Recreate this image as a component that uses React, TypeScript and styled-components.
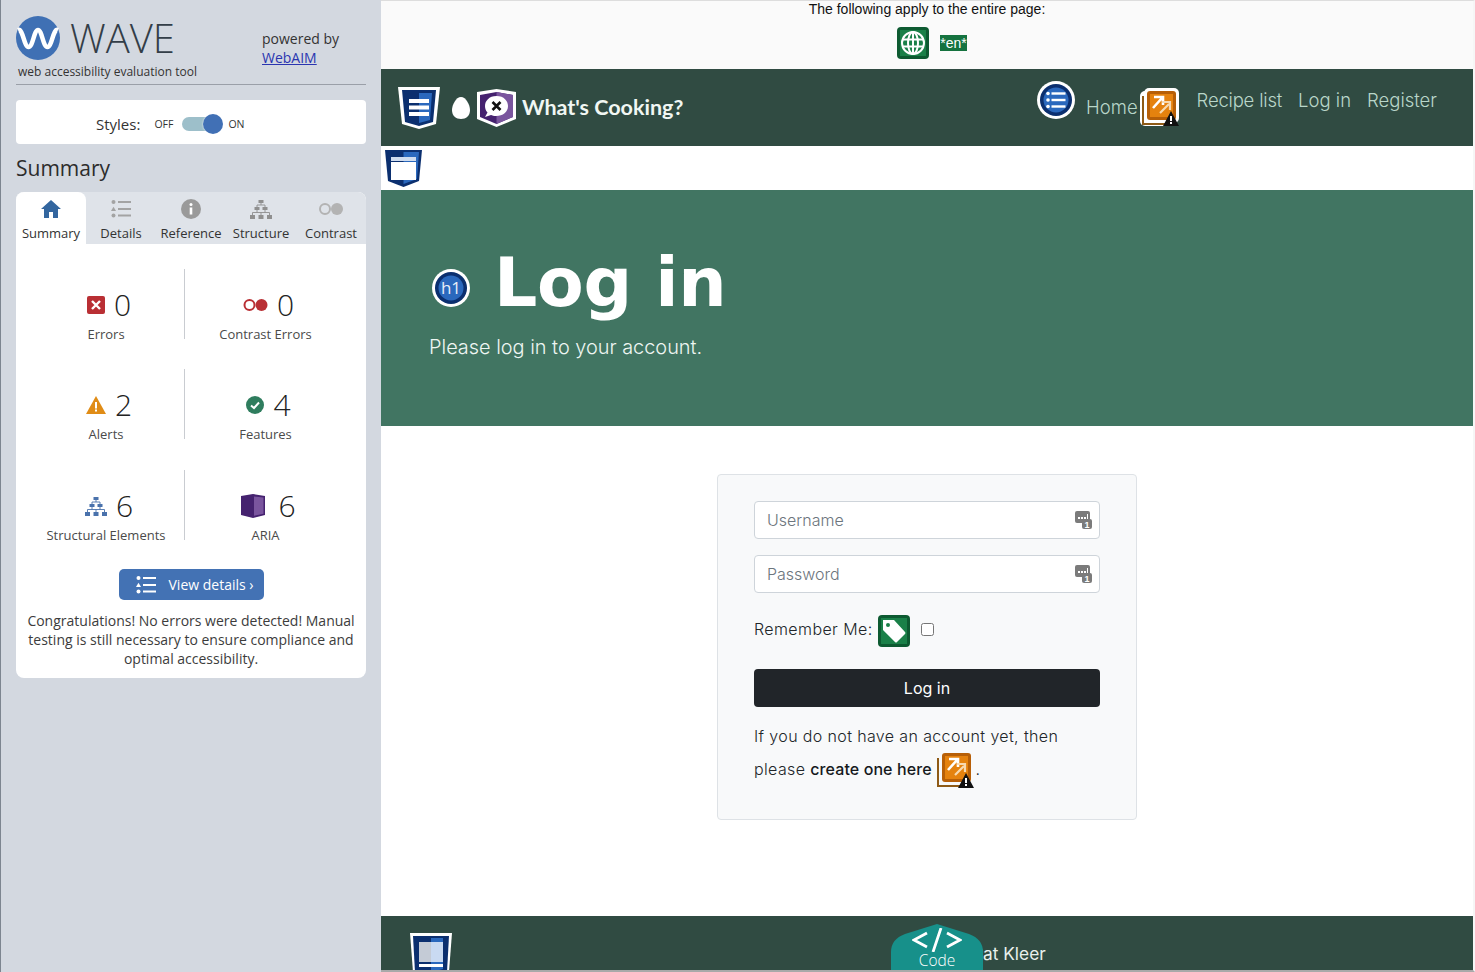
import React from 'react';
import styled, { createGlobalStyle } from 'styled-components';

const GlobalStyle = createGlobalStyle`
  * { box-sizing: border-box; }
  html, body { margin: 0; padding: 0; height: 100%; overflow: hidden; background: #fff; }
  body { font-family: "Open Sans", "Liberation Sans", sans-serif; color: #333; }
  h1, h2, p { margin: 0; }
`;

const Shell = styled.div`
  display: flex;
  width: 1475px;
  height: 972px;
  overflow: hidden;
`;

/* ---------- WAVE sidebar ---------- */

const Sidebar = styled.aside`
  flex: 0 0 381px;
  height: 972px;
  padding: 16px 15px 0 15px;
  background: #d3d8e0;
  border-left: 1px solid #7d8590;
`;

const Brand = styled.div`
  display: flex;
  height: 69px;
  border-bottom: 1px solid #9a9fa8;
`;

const LogoBlock = styled.div`
  flex: 0 0 246px;
`;

const LogoRow = styled.div`
  display: flex;
  align-items: center;
  gap: 10px;
  height: 44px;
`;

const LogoText = styled.span`
  font-weight: 300;
  font-size: 40px;
  line-height: 48px;
  color: #333e48;
`;

const Tagline = styled.div`
  margin: 4px 0 0 2px;
  font-size: 12px;
  line-height: 16px;
  color: #333;
`;

const Powered = styled.div`
  padding-top: 13px;
  font-size: 14px;
  line-height: 19px;
  color: #333;

  a {
    color: #2a35b0;
    text-decoration: underline;
  }
`;

const StylesCard = styled.div`
  display: flex;
  align-items: center;
  height: 44px;
  margin-top: 15px;
  padding: 3px 0 0 80px;
  background: #fff;
  border-radius: 4px;
`;

const StylesLabel = styled.span`
  margin-right: 14px;
  font-size: 15px;
  color: #333;
`;

const ToggleText = styled.span`
  font-size: 10.5px;
  color: #333;
`;

const Toggle = styled.div`
  position: relative;
  width: 40px;
  height: 14px;
  margin: 0 6px 0 9px;
  background: #9dbfca;
  border-radius: 7px;
  &::after {
    content: '';
    position: absolute;
    right: -1px;
    top: -3px;
    width: 20px;
    height: 20px;
    background: #4170b5;
    border-radius: 50%;
    box-shadow: 0 0 2px #fff;
  }
`;

const SummaryTitle = styled.h2`
  margin-top: 10px;
  font-weight: 400;
  font-size: 21px;
  line-height: 29px;
  color: #2c2c2c;
`;

const Panel = styled.section`
  width: 350px;
  margin-top: 9px;
  background: #fff;
  border-radius: 8px;
`;

const TabBar = styled.div`
  display: flex;
  background: #dfe3e9;
  border-radius: 8px 8px 0 0;
`;

const Tab = styled.div<{ $active?: boolean }>`
  flex: 0 0 70px;
  height: 52px;
  padding-top: 7px;
  text-align: center;
  font-size: 13px;
  line-height: 18px;
  color: #333;
  white-space: nowrap;
  background: ${(p) => (p.$active ? '#fff' : 'transparent')};
  border-radius: ${(p) => (p.$active ? '8px 8px 0 0' : '0')};

  svg {
    display: block;
    margin: 0 auto 5px;
  }
`;

const TabIconSlot = styled.div`
  display: flex;
  align-items: center;
  justify-content: center;
  height: 20px;
  margin-bottom: 5px;

  svg {
    margin: 0;
  }
`;

const StatGrid = styled.div`
  display: grid;
  grid-template-columns: 159px 161px;
  grid-auto-rows: 70px;
  row-gap: 30px;
  padding: 25px 0 0 10px;

  & > :nth-child(n + 5) {
    transform: translateY(1px);
  }
`;

const Stat = styled.div<{ $divider?: boolean }>`
  display: flex;
  flex-direction: column;
  align-items: center;
  padding-top: 16px;
  padding-left: ${(p) => (p.$divider ? '2px' : '0')};
  border-right: ${(p) => (p.$divider ? '1px solid #c9ccd1' : 'none')};
`;

const StatTop = styled.div`
  display: flex;
  align-items: center;
  justify-content: center;
  gap: 9px;
  height: 40px;
  padding-left: 6px;
  flex: 0 0 40px;
`;

const StatValue = styled.span`
  font-weight: 300;
  font-size: 30px;
  line-height: 40px;
  color: #222;
`;

const StatLabel = styled.div`
  flex: 0 0 18px;
  font-size: 13px;
  line-height: 18px;
  color: #4a4a4a;
  white-space: nowrap;
`;

const DetailsButton = styled.button`
  display: flex;
  align-items: center;
  gap: 13px;
  width: 145px;
  height: 31px;
  margin: 30px auto 0;
  padding: 0 0 0 17px;
  color: #fff;
  font-family: inherit;
  font-size: 14px;
  background: #4372b4;
  border: none;
  border-radius: 5px;
`;

const Congrats = styled.p`
  padding: 11px 8px 10px;
  text-align: center;
  font-size: 14px;
  line-height: 19px;
  color: #3c3c3c;
`;

/* ---------- page under evaluation ---------- */

const Page = styled.main`
  flex: 0 0 1094px;
  display: flex;
  flex-direction: column;
  position: relative;
  height: 972px;
  border-right: 2px solid #f6f6f6;
  border-top: 1px solid #ddd;
  border-bottom: 2px solid #a9a9a9;
  font-family: Inter, "Open Sans", sans-serif;
  font-weight: 300;
  overflow: hidden;
`;

const PageNotice = styled.div`
  flex: 0 0 68px;
  text-align: center;
  font-family: "Liberation Sans", Arial, sans-serif;
  font-weight: 400;
  font-size: 14px;
  line-height: 17px;
  color: #111;
  background: #fafafa;
`;

const NoticeIcons = styled.div`
  display: flex;
  align-items: center;
  justify-content: center;
  gap: 11px;
  margin-top: 9px;
  padding-left: 10px;
`;

const LangBadge = styled.span`
  font-size: 14px;
  line-height: 16px;
  color: #fff;
  background: #15723f;
`;

const NavBar = styled.nav`
  flex: 0 0 77px;
  display: flex;
  justify-content: space-between;
  padding: 0 36px 0 17px;
  background: #304b42;
`;

const NavBrand = styled.div`
  display: flex;
  align-items: center;
  gap: 7px;
`;

const Egg = styled.svg`
  margin: 0 0 0 5px;
`;

const BrandName = styled.span`
  margin: -2px 0 0 -1px;
  font-family: Lato, sans-serif;
  font-weight: 700;
  font-size: 21.5px;
  color: #f1f7f3;
`;

const NavLinks = styled.div`
  display: flex;
  align-items: flex-start;
`;

const HomeLink = styled.div`
  display: flex;
  align-items: flex-start;
  margin-top: 12px;
`;

const HomeText = styled.span`
  margin: 15px 2px 0 11px;
  font-size: 18.5px;
  line-height: 22px;
  color: #b9d6c9;
`;

const AlertSlot = styled.span`
  display: block;
  margin-top: 7px;
  line-height: 0;
`;

const NavLink = styled.a<{ $first?: boolean }>`
  margin: 20px 0 0 ${(p) => (p.$first ? '18px' : '16px')};
  font-size: 18.5px;
  line-height: 22px;
  letter-spacing: ${(p) => (p.$first ? '-0.2px' : '0')};
  color: #b9d6c9;
`;

const IconStrip = styled.div`
  flex: 0 0 44px;
  min-height: 0;
  padding: 4px 0 0 4px;
  background: #fff;

  svg {
    display: block;
  }
`;

const Hero = styled.header`
  flex: 0 0 236px;
  padding: 48px 0 0 48px;
  color: #fff;
  background: #417562;
`;

const HeroTitle = styled.h1`
  display: flex;
  align-items: center;
  gap: 24px;
  height: 90px;
  font-family: "DejaVu Sans", sans-serif;
  font-weight: 700;
  font-size: 68px;
  letter-spacing: -0.3px;
  line-height: 90px;
`;

const HeroIcon = styled.span`
  display: block;
  margin: 10px 0 0 3px;
  height: 38px;
  line-height: 0;
`;

const HeroText = styled.p`
  margin-top: 5px;
  font-size: 19.9px;
  line-height: 28px;
  color: #eef6f2;
`;

const Content = styled.div`
  flex: 1;
  min-height: 0;
  padding-top: 48px;
  background: #fff;
`;

const LoginCard = styled.form`
  width: 420px;
  height: 346px;
  margin: 0 auto;
  padding: 26px 36px 0;
  background: #f8f9fa;
  border: 1px solid #dee2e6;
  border-radius: 4px;
`;

const FieldWrap = styled.div`
  position: relative;
  height: 38px;
  margin-bottom: 16px;
`;

const Field = styled.input`
  display: block;
  width: 100%;
  height: 38px;
  padding: 0 12px;
  font-family: inherit;
  font-weight: 300;
  font-size: 16px;
  background: #fff;
  border: 1px solid #ced4da;
  border-radius: 4px;
  &::placeholder {
    color: #6c757d;
    opacity: 1;
  }
`;

const FieldBadge = styled.svg`
  position: absolute;
  right: 8px;
  top: 10px;
`;

const RememberRow = styled.div`
  display: flex;
  align-items: center;
  height: 32px;
  margin-top: 22px;
  font-size: 16px;
  letter-spacing: 0.4px;
  color: #212529;
`;

const RememberLabel = styled.label`
  margin: 0 5px 4px 0;
`;

const RememberBox = styled.input`
  width: 13px;
  height: 13px;
  margin: 0 0 4px 11px;
`;

const SubmitButton = styled.button`
  display: block;
  width: 100%;
  height: 38px;
  margin-top: 22px;
  color: #fff;
  font-family: inherit;
  font-weight: 400;
  font-size: 16px;
  background: #212529;
  border: none;
  border-radius: 4px;
`;

const SignupText = styled.p`
  margin-top: 13px;
  font-size: 16px;
  line-height: 33px;
  letter-spacing: 0.37px;
  color: #212529;
`;

const SignupLink = styled.a`
  font-weight: 500;
  letter-spacing: 0.1px;
  color: #16191c;
`;

const InlineIcon = styled.span`
  position: relative;
  display: inline-block;
  width: 39px;
  height: 1px;
  margin: 0 -3px 0 3px;

  svg {
    position: absolute;
    left: 0;
    top: -24px;
  }
`;

const Footer = styled.footer`
  flex: 0 0 54px;
  min-height: 0;
  display: flex;
  padding: 17px 0 0 29px;
  background: #304b42;
  overflow: hidden;

  svg {
    display: block;
    flex: none;
  }
`;

const FooterText = styled.span`
  margin: 9px 0 0 520px;
  font-weight: 400;
  font-size: 17.3px;
  line-height: 24px;
  color: #e9f1ed;
`;

const CodeTab = styled.div`
  position: absolute;
  left: 510px;
  bottom: -2px;
  width: 92px;
  height: 48px;
  padding-top: 4px;
  text-align: center;
  font-family: "Open Sans", sans-serif;
  color: #fff;
  background: #17908a;
  clip-path: path('M46 0 L78 10 Q92 15 92 28 V48 H0 V28 Q0 15 14 10 Z');

  svg {
    display: block;
    margin: 0 auto;
  }
`;

const CodeLabel = styled.div`
  font-size: 15.5px;
  line-height: 17px;
`;

/* ---------- WAVE icons ---------- */

const LogoMark = () => (
  <svg width="44" height="44" viewBox="0 0 44 44">
    <circle cx="22" cy="22" r="22" fill="#3f70b4" />
    <path d="M2 14 C7 12 8 31 12.500 31 C17 31 18 14 22 14 C26 14 27 31 31.500 31 C36 31 37 12 42 14" fill="none" stroke="#fff" strokeWidth="4.500" />
  </svg>
);

const TabHome = () => (
  <svg width="20" height="20" viewBox="0 0 20 20">
    <path d="M10 1 L20 10 H17 V19 H12 V13 H8 V19 H3 V10 H0 Z" fill="#33669f" />
  </svg>
);

const ListGlyph = ({ color, size = 20 }: { color: string; size?: number }) => (
  <svg width={size} height={size} viewBox="0 0 20 20" fill={color}>
    <circle cx="2.500" cy="3" r="2" />
    <path d="M2.500 7.800 L5 12 H0 Z" />
    <circle cx="2.500" cy="16.500" r="2" />
    <rect x="7" y="2" width="13" height="2" />
    <rect x="7" y="9" width="13" height="2" />
    <rect x="7" y="15.500" width="13" height="2" />
  </svg>
);

const TabInfo = () => (
  <svg width="20" height="20" viewBox="0 0 20 20">
    <circle cx="10" cy="10" r="10" fill="#9a9a9a" />
    <circle cx="10" cy="5.500" r="1.500" fill="#fff" />
    <rect x="8.700" y="8.500" width="2.600" height="7" fill="#fff" />
  </svg>
);

const TreeGlyph = ({ color }: { color: string }) => (
  <svg width="22" height="19" viewBox="0 0 22 19">
    <g fill={color}>
      <rect x="8.500" y="0" width="5" height="3" />
      <rect x="4.500" y="7" width="5" height="3" />
      <rect x="12.500" y="7" width="5" height="3" />
      <rect x="0" y="15" width="5" height="4" />
      <rect x="8.500" y="15" width="5" height="4" />
      <rect x="17" y="15" width="5" height="4" />
    </g>
    <path d="M11 3 V5 M7 7 V5 H15 V7 M7 10 V12.500 M15 10 V12.500 M2.500 15 V12.500 H19.500 V15 M11 12.500 V15" fill="none" stroke={color} strokeWidth="0.900" />
  </svg>
);

const TabContrast = () => (
  <svg width="26" height="14" viewBox="0 0 26 14">
    <circle cx="7" cy="7" r="5" fill="none" stroke="#b3b3b3" strokeWidth="2" />
    <circle cx="19" cy="7" r="6" fill="#b3b3b3" />
  </svg>
);

const ErrorIcon = () => (
  <svg width="18" height="18" viewBox="0 0 18 18">
    <rect width="18" height="18" rx="2" fill="#b92f34" />
    <path d="M5 5 L13 13 M13 5 L5 13" stroke="#fff" strokeWidth="2.400" />
  </svg>
);

const ContrastErrorIcon = () => (
  <svg width="25" height="14" viewBox="0 0 25 14">
    <circle cx="6.500" cy="7" r="5" fill="none" stroke="#b92f34" strokeWidth="2" />
    <circle cx="18.500" cy="7" r="6" fill="#b92f34" />
  </svg>
);

const AlertIcon = () => (
  <svg width="20" height="18" viewBox="0 0 20 18">
    <path d="M10 0 L20 18 H0 Z" fill="#e08c16" />
    <rect x="9" y="6" width="2" height="6.500" fill="#fff" />
    <rect x="9" y="13.500" width="2" height="2" fill="#fff" />
  </svg>
);

const FeatureIcon = () => (
  <svg width="18" height="18" viewBox="0 0 18 18">
    <circle cx="9" cy="9" r="9" fill="#2f7d5e" />
    <path d="M5 9.500 L8 12 L13 6.500" fill="none" stroke="#fff" strokeWidth="2" />
  </svg>
);

const AriaBox = () => (
  <svg width="28" height="24" viewBox="0 0 28 24">
    <path d="M0 2 L12 0 V24 L0 21 Z" fill="#45226f" />
    <path d="M12 0 L24 2 V21 L12 24 Z" fill="#45226f" />
    <path d="M13 2.500 L22.500 3.500 V19.800 L13 21.800 Z" fill="#7a559e" />
  </svg>
);

const StructureShield = () => (
  <svg width="42" height="42" viewBox="0 0 42 42">
    <path d="M0 0 H42 L38 37 L21 42 L4 37 Z" fill="#fff" />
    <path d="M4 3 H38 L35 35 L21 39 L7 35 Z" fill="#0b2f6f" />
    <path d="M21 6 H34 L32 33 L21 36 Z" fill="#2a68bd" />
    <path d="M11 12 H31 V16 H11 Z M11 18.500 H31 V22.500 H11 Z M11 25 H31 V29 H11 Z" fill="#fff" />
  </svg>
);

const HeaderShield = () => (
  <svg width="37" height="37" viewBox="0 0 37 37">
    <path d="M0 0 H37 L34 31 L18.500 37 L3 31 Z" fill="#0b2f6f" />
    <path d="M18.500 2 H34 L32 29 L18.500 34 Z" fill="#2a68bd" />
    <rect x="6" y="7" width="25" height="4" fill="#cfdcef" />
    <rect x="6" y="12" width="25" height="18" fill="#fff" />
  </svg>
);

const FooterShield = () => (
  <svg width="42" height="39" viewBox="0 0 42 39">
    <path d="M0 0 H42 L39 39 H3 Z" fill="#fff" />
    <path d="M3 3 H39 L37 39 H5 Z" fill="#0b2f6f" />
    <path d="M21 5 H33 V36 L21 39 Z" fill="#2a68bd" />
    <rect x="9" y="9" width="12" height="20" fill="#c4cbd6" />
    <rect x="21" y="9" width="12" height="20" fill="#c9daf2" />
    <rect x="9" y="31" width="24" height="3" fill="#fff" />
  </svg>
);

const AriaShield = () => (
  <svg width="39" height="38" viewBox="0 0 39 38">
    <path d="M0 3 L19.500 0 L39 3 V30 L19.500 38 L0 30 Z" fill="#fff" />
    <path d="M3 6 L19.500 3 L36 6 V28 L19.500 35 L3 28 Z" fill="#45226f" />
    <path d="M19.500 3 L36 6 V28 L19.500 35 Z" fill="#7a559e" />
    <path d="M19.500 7 C27 7 31 12 31 17 C31 23 26 27 19 27 C17 27 15 26.500 14 26 L8 28 L10.500 23.500 C8.500 21.500 8 19 8 17 C8 12 12 7 19.500 7 Z" fill="#fff" />
    <path d="M15.500 13 L23.500 21 M23.500 13 L15.500 21" stroke="#111" strokeWidth="2.600" />
  </svg>
);

const ListCircle = () => (
  <svg width="38" height="38" viewBox="0 0 38 38">
    <circle cx="19" cy="19" r="19" fill="#fff" />
    <circle cx="19" cy="19" r="16" fill="#0b2f6f" />
    <circle cx="19" cy="19" r="12.500" fill="#2a68bd" />
    <g fill="#fff">
      <circle cx="11" cy="12.500" r="1.800" />
      <circle cx="11" cy="19" r="1.800" />
      <circle cx="11" cy="25.500" r="1.800" />
      <rect x="14.500" y="11.300" width="14" height="2.400" />
      <rect x="14.500" y="17.800" width="14" height="2.400" />
      <rect x="14.500" y="24.300" width="14" height="2.400" />
    </g>
  </svg>
);

const H1Circle = () => (
  <svg width="38" height="38" viewBox="0 0 38 38">
    <circle cx="19" cy="19" r="19" fill="#fff" />
    <circle cx="19" cy="19" r="16" fill="#0b2f6f" />
    <circle cx="19" cy="19" r="12.500" fill="#2a68bd" />
    <text x="19" y="25" textAnchor="middle" fontFamily="Open Sans, sans-serif" fontSize="17" letterSpacing="0" fontWeight="400" fill="#e6eef8">h1</text>
  </svg>
);

const LinkAlert = ({ outlined }: { outlined?: boolean }) => (
  <svg width="39" height="40" viewBox="0 0 39 40">
    {outlined && <rect x="0" y="3" width="37" height="35" rx="5" fill="#fff" />}
    <path d="M3 8 V36 H31" fill="none" stroke="#8e5a16" strokeWidth="2" />
    {outlined && <rect x="4" y="0" width="35" height="35" rx="5" fill="#fff" />}
    <rect x="7" y="3" width="29" height="29" rx="3" fill="#b75f07" />
    <rect x="10" y="6" width="23" height="23" fill="#e5820e" />
    <path d="M13 20 L22 10 M14 9 H23 V17" fill="none" stroke="#fff" strokeWidth="2.600" />
    <path d="M20 25 L29 16 M22 14 H30 V22" fill="none" stroke="#f7d9b0" strokeWidth="2.200" />
    <path d="M31 23 L39 38 H23 Z" fill="#111" />
    <rect x="30" y="28" width="2" height="5" fill="#fff" />
    <rect x="30" y="34" width="2" height="2" fill="#fff" />
  </svg>
);

const LabelIcon = () => (
  <svg width="32" height="32" viewBox="0 0 32 32">
    <rect width="32" height="32" rx="4" fill="#0d5a31" />
    <rect x="3" y="3" width="26" height="26" fill="#1a8048" />
    <path d="M5 5 H16 L27 17 Q28 18 27 19 L19 27 Q18 28 17 27 L5 15 Z" fill="#fff" />
    <circle cx="10" cy="10" r="2" fill="#1a8048" />
  </svg>
);

const GlobeIcon = () => (
  <svg width="32" height="32" viewBox="0 0 32 32">
    <rect width="32" height="32" rx="4" fill="#0d5a31" />
    <rect x="3" y="3" width="26" height="26" fill="#1a8048" />
    <g fill="none" stroke="#fff" strokeWidth="2">
      <circle cx="16" cy="16" r="11" />
      <ellipse cx="16" cy="16" rx="5" ry="11" />
      <path d="M16 5 V27 M5.500 12.500 H26.500 M5.500 19.500 H26.500" />
    </g>
  </svg>
);

const PasswordBadge = () => (
  <FieldBadge width="17" height="18" viewBox="0 0 17 18">
    <rect x="0" y="0" width="15" height="12" rx="2" fill="#7b7b7b" />
    <path d="M3 6 h2 v2 h-2z M6 6 h2 v2 h-2z M9 6 h2 v2 h-2z M12 3 h1 v5 h-1z" fill="#fff" />
    <rect x="7" y="8" width="10" height="10" rx="2" fill="#7b7b7b" />
    <text x="12" y="16.500" textAnchor="middle" fontFamily="Liberation Sans, sans-serif" fontWeight="700" fontSize="9" fill="#fff">1</text>
  </FieldBadge>
);

const CodeGlyph = () => (
  <svg width="50" height="24" viewBox="0 0 50 24">
    <path d="M15 5 L2 12 L15 19 M35 5 L48 12 L35 19 M29 0 L21 24" fill="none" stroke="#fff" strokeWidth="2.800" />
  </svg>
);

const App: React.FC = () => {
  return (
    <Shell>
      <GlobalStyle />
      <Sidebar>
        <Brand>
          <LogoBlock>
            <LogoRow>
              <LogoMark />
              <LogoText>WAVE</LogoText>
            </LogoRow>
            <Tagline>web accessibility evaluation tool</Tagline>
          </LogoBlock>
          <Powered>
            powered by
            <br />
            <a href="#webaim">WebAIM</a>
          </Powered>
        </Brand>

        <StylesCard>
          <StylesLabel>Styles:</StylesLabel>
          <ToggleText>OFF</ToggleText>
          <Toggle />
          <ToggleText>ON</ToggleText>
        </StylesCard>

        <SummaryTitle>Summary</SummaryTitle>

        <Panel>
          <TabBar>
            <Tab $active>
              <TabHome />
              Summary
            </Tab>
            <Tab>
              <ListGlyph color="#a3a3a3" />
              Details
            </Tab>
            <Tab>
              <TabInfo />
              Reference
            </Tab>
            <Tab>
              <TabIconSlot><TreeGlyph color="#8f8f8f" /></TabIconSlot>
              Structure
            </Tab>
            <Tab>
              <TabIconSlot><TabContrast /></TabIconSlot>
              Contrast
            </Tab>
          </TabBar>

          <StatGrid>
            <Stat $divider>
              <StatTop><ErrorIcon /><StatValue>0</StatValue></StatTop>
              <StatLabel>Errors</StatLabel>
            </Stat>
            <Stat>
              <StatTop><ContrastErrorIcon /><StatValue>0</StatValue></StatTop>
              <StatLabel>Contrast Errors</StatLabel>
            </Stat>
            <Stat $divider>
              <StatTop><AlertIcon /><StatValue>2</StatValue></StatTop>
              <StatLabel>Alerts</StatLabel>
            </Stat>
            <Stat>
              <StatTop><FeatureIcon /><StatValue>4</StatValue></StatTop>
              <StatLabel>Features</StatLabel>
            </Stat>
            <Stat $divider>
              <StatTop><TreeGlyph color="#4a72ac" /><StatValue>6</StatValue></StatTop>
              <StatLabel>Structural Elements</StatLabel>
            </Stat>
            <Stat>
              <StatTop><AriaBox /><StatValue>6</StatValue></StatTop>
              <StatLabel>ARIA</StatLabel>
            </Stat>
          </StatGrid>

          <DetailsButton type="button">
            <ListGlyph color="#fff" />
            View details ›
          </DetailsButton>

          <Congrats>
            Congratulations! No errors were detected! Manual testing is still necessary to ensure compliance and optimal accessibility.
          </Congrats>
        </Panel>
      </Sidebar>

      <Page>
        <PageNotice>
          The following apply to the entire page:
          <NoticeIcons>
            <GlobeIcon />
            <LangBadge>*en*</LangBadge>
          </NoticeIcons>
        </PageNotice>

        <NavBar>
          <NavBrand>
            <StructureShield />
            <Egg width="18" height="22" viewBox="0 0 18 22">
              <path d="M9 0 C14 0 18 8 18 13 C18 19 14 22 9 22 C4 22 0 19 0 13 C0 8 4 0 9 0 Z" fill="#fff" />
            </Egg>
            <AriaShield />
            <BrandName>What's Cooking?</BrandName>
          </NavBrand>
          <NavLinks>
            <HomeLink>
              <ListCircle />
              <HomeText>Home</HomeText>
              <AlertSlot><LinkAlert outlined /></AlertSlot>
            </HomeLink>
            <NavLink $first>Recipe list</NavLink>
            <NavLink>Log in</NavLink>
            <NavLink>Register</NavLink>
          </NavLinks>
        </NavBar>

        <IconStrip>
          <HeaderShield />
        </IconStrip>

        <Hero>
          <HeroTitle>
            <HeroIcon><H1Circle /></HeroIcon>
            Log in
          </HeroTitle>
          <HeroText>Please log in to your account.</HeroText>
        </Hero>

        <Content>
          <LoginCard>
            <FieldWrap>
              <Field type="text" placeholder="Username" />
              <PasswordBadge />
            </FieldWrap>
            <FieldWrap>
              <Field type="password" placeholder="Password" />
              <PasswordBadge />
            </FieldWrap>
            <RememberRow>
              <RememberLabel>Remember Me:</RememberLabel>
              <LabelIcon />
              <RememberBox type="checkbox" />
            </RememberRow>
            <SubmitButton type="button">Log in</SubmitButton>
            <SignupText>
              If you do not have an account yet, then please <SignupLink>create one here</SignupLink>
              <InlineIcon><LinkAlert /></InlineIcon> .
            </SignupText>
          </LoginCard>
        </Content>

        <Footer>
          <FooterShield />
          <FooterText>Pat Kleer</FooterText>
        </Footer>

        <CodeTab>
          <CodeGlyph />
          <CodeLabel>Code</CodeLabel>
        </CodeTab>
      </Page>
    </Shell>
  );
};

export default App;
